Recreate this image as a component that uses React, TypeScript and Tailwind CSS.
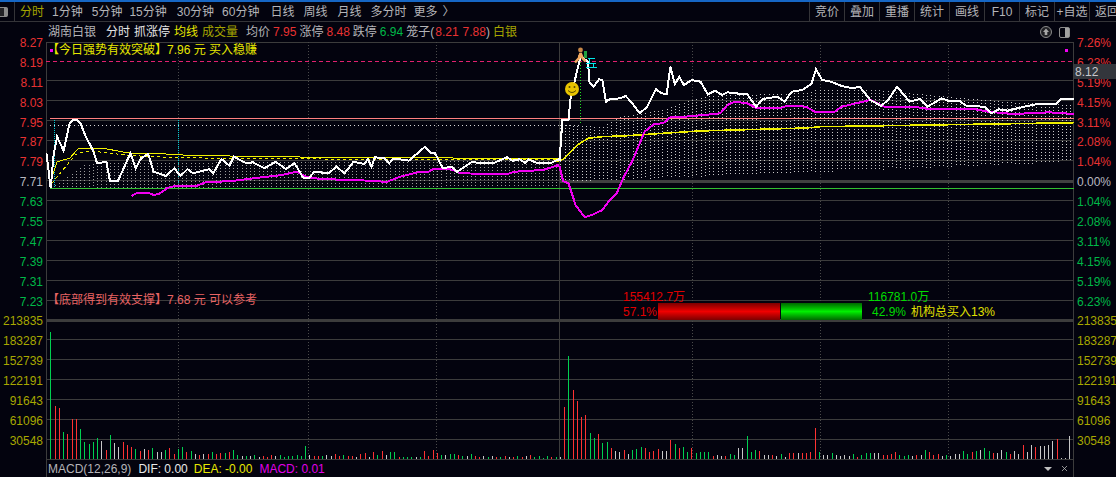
import { X } from "lucide-react";

type Pt = [number, number];

// traces were read off enlarged crops: x is scaled 2.8, y is scaled 3
const trace = (ox: number, oy: number, raw: number[]): Pt[] => {
  const out: Pt[] = [];
  for (let i = 0; i < raw.length; i += 2) out.push([ox + raw[i] / 2.8, oy + raw[i + 1] / 3]);
  return out;
};
const toPoints = (pts: Pt[]) => pts.map(([x, y]) => `${x.toFixed(1)},${y.toFixed(1)}`).join(" ");

const lerp = (table: Pt[], x: number) => {
  for (let i = 1; i < table.length; i++) {
    if (x <= table[i][0]) {
      const [x0, y0] = table[i - 1];
      const [x1, y1] = table[i];
      return y0 + ((y1 - y0) * (x - x0)) / (x1 - x0);
    }
  }
  return table[table.length - 1][1];
};

const priceLine: Pt[] = [
  ...trace(0, 120, [
    130, 100, 142, 205, 150, 105, 160, 50, 178, 92, 195, 10, 205, 0, 216, 0, 225, 10, 240, 50, 260, 90, 272, 130, 298,
    125, 308, 183, 330, 183, 365, 100, 380, 145, 395, 115, 415, 102, 430, 155, 465, 168, 488, 145, 505, 168, 525, 147,
    540, 160, 585, 148, 597, 160, 620, 117, 642, 137, 655, 110, 690, 130, 708, 127, 740, 145, 772, 125, 800, 147, 825,
    130, 850, 175, 865, 175, 880, 155, 920, 160, 942, 140, 965, 160, 990, 125, 1020, 132, 1030, 118, 1040, 140, 1050,
    112, 1075, 115, 1090, 130, 1100, 118, 1120, 118, 1145, 122, 1190, 80, 1205, 98, 1218, 100, 1240, 145, 1265, 140,
    1280, 155, 1320, 127, 1380, 130, 1420, 112, 1435, 122, 1455, 118, 1470, 128, 1480, 118, 1505, 130, 1540, 130, 1565,
    118,
  ]),
  ...trace(556, 0, [
    10, 480, 18, 360, 35, 360, 40, 300, 65, 185, 70, 170, 90, 185, 93, 245, 105, 260, 120, 238, 130, 240, 140, 305, 150,
    298, 180, 295, 195, 288, 210, 305, 235, 340, 255, 320, 280, 268, 295, 280, 310, 282, 320, 200, 333, 252, 345, 230,
    358, 255, 380, 240, 405, 245, 425, 283, 445, 272, 465, 285, 480, 277, 520, 282, 535, 282, 560, 320, 580, 297, 620,
    290, 640, 305, 660, 275, 690, 270, 715, 252, 728, 208, 745, 240, 770, 245, 800, 258, 830, 265, 850, 260, 880, 300,
    910, 318, 930, 300, 955, 260, 990, 305, 1020, 297, 1040, 320, 1080, 295, 1100, 303, 1130, 303, 1150, 318, 1200, 320,
    1220, 340, 1240, 328, 1265, 332, 1310, 320, 1350, 312, 1400, 312, 1415, 297, 1450, 297,
  ]),
];

const magentaLine: Pt[] = [
  ...trace(0, 120, [
    368, 228, 385, 218, 415, 218, 430, 225, 445, 222, 470, 203, 490, 198, 550, 198, 575, 187, 650, 183, 710, 175, 790,
    165, 830, 155, 860, 172, 900, 177, 1060, 183, 1080, 187, 1120, 170, 1170, 157, 1200, 155, 1215, 146, 1260, 147, 1290,
    160, 1420, 163, 1440, 155, 1520, 150, 1565, 135,
  ]),
  ...trace(556, 120, [
    0, 135, 10, 140, 20, 183, 35, 190, 55, 255, 80, 292, 100, 285, 130, 270, 150, 240, 170, 220, 190, 170, 215, 120, 248,
    35, 275, 12, 300, 10,
  ]),
  ...trace(556, 0, [
    320, 352, 360, 350, 415, 345, 460, 340, 480, 315, 500, 305, 535, 310, 560, 323, 630, 323, 650, 317, 700, 320, 725,
    335, 780, 335, 800, 320, 880, 300, 920, 320, 1000, 320, 1050, 328, 1170, 327, 1210, 335, 1280, 342, 1380, 337, 1450,
    342,
  ]),
];

const avgLeft: Pt[] = trace(0, 120, [
  140, 190, 160, 125, 195, 115, 220, 85, 290, 85, 340, 95, 370, 100, 440, 100, 490, 104, 560, 107, 725, 109, 950, 113,
  1565, 115,
]);
const avgRight: Pt[] = trace(556, 120, [
  0, 125, 20, 118, 60, 75, 90, 55, 130, 50, 200, 47, 300, 40, 400, 33, 700, 24, 740, 20, 1100, 14, 1450, 8,
]);
const avgDashed: Pt[] = trace(0, 120, [
  145, 190, 180, 145, 210, 105, 240, 93, 290, 97, 350, 105, 420, 110, 600, 115, 900, 117, 1100, 118, 1565, 118,
]);

const dotTop: Pt[] = [
  [50, 188], [60, 182], [70, 175], [85, 165], [100, 163], [558, 161], [559, 125], [602, 127], [620, 117], [663, 110],
  [692, 100], [710, 96], [806, 93], [817, 90], [877, 90], [949, 97], [1020, 103], [1073, 105],
];
const dotBottom: Pt[] = [[50, 188], [558, 188], [559, 182], [692, 177], [820, 172], [948, 167], [1073, 162]];

const volumes = (
  "g127 r53 r51 g27 r25 r40 r40 g30 g17 g15 g17 g21 w18 r9 g24 w16 w12 r17 r14 r12 " +
  "g10 r8 w10 r9 g11 w7 w7 g9 r11 r5 g10 g12 r7 g8 w5 r4 w5 r5 g7 r5 " +
  "r6 g6 r7 g9 g4 w3 g3 w3 g4 w2 r3 r2 r4 w3 g4 g2 g3 g3 g4 g3 " +
  "g13 w4 r3 r3 g3 w4 w3 r5 r3 g4 r3 r3 w2 r5 r6 w2 r7 g4 r8 w4 " +
  "g7 g7 r2 g2 g2 g2 w2 g2 r8 r3 r9 r6 g4 w4 g5 g5 r4 g3 w3 g5 " +
  "r3 r2 w3 g2 w3 r2 g2 r3 w2 r2 g3 r2 w3 r4 g2 g3 g1 g3 r2 g2 " +
  "w2 r52 g103 r69 r58 r42 r44 g26 g21 r25 g16 g17 r11 w8 w7 r9 w5 g9 g10 g12 " +
  "r11 r7 r8 r10 w8 w8 r19 g15 r11 g12 g7 r11 g6 g7 g7 g7 r3 w4 w3 r3 " +
  "g5 g4 w11 w11 g23 g7 g9 r8 w4 w4 r4 w3 g5 w2 r6 r6 w6 r6 r6 r7 " +
  "r31 g7 w4 w4 g6 w4 w3 w4 w3 g5 r2 g4 g6 g6 w6 w6 r4 r4 r5 r7 " +
  "g4 g3 g4 w3 r4 w4 g9 r7 r4 r5 w3 g4 w3 w5 w5 g8 g5 r7 g8 w9 " +
  "g11 g8 r6 w6 w9 g7 r5 w8 w5 r14 w7 w14 r12 w13 w13 w14 w18 r20 w1 w1 w23"
)
  .split(" ")
  .map((v) => ({ kind: v[0], h: Number(v.slice(1)) }));

const barColor: Record<string, string> = { g: "#00d050", r: "#ff3232", w: "#c8c8c8" };

const gridY = [81, 101, 121, 141, 161, 181, 201, 221, 241, 261, 281, 301, 340, 360, 380, 400, 420, 440];
const dottedX = [178, 308, 436, 692, 820, 948];
const dotColumns = Array.from({ length: 241 }, (_, i) => 50.4 + i * 4.25);

const leftAxis = [
  ["8.27", "r"], ["8.19", "r"], ["8.11", "r"], ["8.03", "r"], ["7.95", "r"], ["7.87", "r"], ["7.79", "r"],
  ["7.71", "n"], ["7.63", "g"], ["7.55", "g"], ["7.47", "g"], ["7.39", "g"], ["7.31", "g"], ["7.23", "g"],
  ["213835", "v"], ["183287", "v"], ["152739", "v"], ["122191", "v"], ["91643", "v"], ["61096", "v"], ["30548", "v"],
];
const rightAxis = [
  ["7.26%", "r"], ["6.23%", "r"], ["5.19%", "r"], ["4.15%", "r"], ["3.11%", "r"], ["2.08%", "r"], ["1.04%", "r"],
  ["0.00%", "n"], ["1.04%", "g"], ["2.08%", "g"], ["3.11%", "g"], ["4.15%", "g"], ["5.19%", "g"], ["6.23%", "g"],
  ["213835", "v"], ["183287", "v"], ["152739", "v"], ["122191", "v"], ["91643", "v"], ["61096", "v"], ["30548", "v"],
];
const axisColor: Record<string, string> = {
  r: "text-[#e83232]",
  g: "text-[#00b848]",
  n: "text-[#b8b8c0]",
  v: "text-[#a8a800]",
};

const periods = [
  ["1分钟", "ml-[8px]"], ["5分钟", "ml-[9px]"], ["15分钟", "ml-[7px]"], ["30分钟", "ml-[10px]"], ["60分钟", "ml-[8px]"],
  ["日线", "ml-[11px]"], ["周线", "ml-[9px]"], ["月线", "ml-[10px]"], ["多分时", "ml-[9px]"], ["更多", "ml-[7px]"],
];
const tools = ["竞价", "叠加", "重播", "统计", "画线", "F10", "标记", "+自选", "返回"];

function Chart() {
  return (
    <svg width={1028} height={418} viewBox="46 42 1028 418" className="block" shapeRendering="crispEdges" fill="none">
      <line x1={46} x2={1074} y1={42.5} y2={42.5} stroke="#3c3c3c" />
      {gridY.map((y) => (
        <line key={y} x1={46} x2={1074} y1={y - 0.5} y2={y - 0.5} stroke="#3c3c3c" />
      ))}
      <line x1={46} x2={1074} y1={320.5} y2={320.5} stroke="#3c3c3c" strokeWidth={3} />
      <line x1={46} x2={1074} y1={459.5} y2={459.5} stroke="#3c3c3c" />
      <line x1={559} x2={1074} y1={181.5} y2={181.5} stroke="#404040" strokeWidth={3} />
      <line x1={46.5} x2={46.5} y1={42} y2={460} stroke="#3c3c3c" />
      <line x1={559.5} x2={559.5} y1={42} y2={460} stroke="#3c3c3c" />
      <line x1={1073.5} x2={1073.5} y1={42} y2={460} stroke="#3c3c3c" />
      {dottedX.map((x) => (
        <line key={x} x1={x + 0.5} x2={x + 0.5} y1={42} y2={460} stroke="#4a4a4a" strokeDasharray="1 2" />
      ))}
      <line x1={54.5} x2={54.5} y1={118} y2={188} stroke="#00c8d0" strokeDasharray="1 1" />
      <line x1={178.5} x2={178.5} y1={118} y2={188} stroke="#00c8d0" strokeDasharray="1 1" />
      <line x1={580.5} x2={580.5} y1={62} y2={125} stroke="#20e020" strokeDasharray="1 2" />

      {dotColumns.map((x) => (
        <line
          key={x}
          x1={Math.round(x) + 0.5}
          x2={Math.round(x) + 0.5}
          y1={Math.round(lerp(dotTop, x))}
          y2={Math.round(lerp(dotBottom, x))}
          stroke={x < 558 ? "#9c9c9c" : "#c8c8c8"}
          strokeDasharray="1 2"
        />
      ))}
      <line x1={50} x2={580} y1={125.5} y2={125.5} stroke="#d8d8d8" strokeDasharray="1 3" />

      <line x1={46} x2={1074} y1={61.5} y2={61.5} stroke="#e0206e" strokeDasharray="4 3" />
      <line x1={50} x2={1074} y1={118.5} y2={118.5} stroke="#ff8080" />
      <line x1={50} x2={1074} y1={188.5} y2={188.5} stroke="#30c030" />

      {volumes.map((bar, i) => (
        <rect
          key={i}
          x={Math.ceil(50 + i * 4.245)}
          y={459 - bar.h}
          width={1}
          height={bar.h}
          fill={barColor[bar.kind]}
        />
      ))}

      <polyline points={toPoints(avgDashed)} stroke="#f0f000" strokeDasharray="3 3" />
      <polyline points={toPoints(avgLeft)} stroke="#f0f000" />
      <polyline points={toPoints(avgRight)} stroke="#f0f000" strokeWidth={1.6} />
      <polyline points={toPoints(magentaLine)} stroke="#f000f0" strokeWidth={2} />
      <polyline points={toPoints(priceLine)} stroke="#ffffff" strokeWidth={2} />

      {/* buy flag, runner and smiley on the peak */}
      <rect x={584} y={51} width={3} height={7} fill="#20a040" />
      <g stroke="#00e8e8">
        <path d="M588 58.5h7M586 63.5h10M586 67.5h11M589 58v5M593 63v4" />
      </g>
      <g shapeRendering="auto">
        <circle cx={580.5} cy={50} r={2.4} fill="#c88848" />
        <path d="M580.5 53l-1.5 5-4 4.5M580.5 53l2 5 3 3.5M578 56.5l5 .5" stroke="#f0a860" strokeWidth={2.6} />
        <circle cx={572} cy={89} r={7} fill="#e8c400" />
        <circle cx={569.5} cy={87} r={1} fill="#5a4a00" />
        <circle cx={574.5} cy={87} r={1} fill="#5a4a00" />
        <path d="M568 90.5q4 4 8 0" stroke="#5a4a00" />
      </g>
    </svg>
  );
}

export default function App() {
  return (
    <div className="w-[1116px] h-[477px] overflow-hidden bg-[#03030e] flex flex-col font-['Liberation_Sans','Noto_Sans_CJK_SC',sans-serif] text-[12px] leading-none text-[#b4b4b8]">
      <div className="h-[2px] bg-[#1666c4]" />

      {/* top toolbar */}
      <div className="h-[20px] flex items-stretch border-b border-[#343438]">
        <div className="w-[15px] shrink-0 flex items-center border-r border-[#343438]">
          <div className="w-[8px] h-[10px] bg-[#8a8a8a] rounded-r-[2px] border border-l-0 border-[#8a8a8a] flex">
            <div className="w-[4px] h-full bg-[#222226]" />
          </div>
        </div>
        <div className="flex items-center pl-[5px] w-[794px] shrink-0">
          <span className="text-[#a6a600]">分时</span>
          {periods.map(([label, gap]) => (
            <span key={label} className={gap}>
              {label}
            </span>
          ))}
          <span className="ml-[5px]">〉</span>
        </div>
        {tools.map((tool) => (
          <div key={tool} className="w-[35px] shrink-0 border-l border-[#343438] flex items-center justify-center whitespace-nowrap">
            {tool}
          </div>
        ))}
      </div>

      {/* info row */}
      <div className="h-[20px] flex items-center pl-[48px] pr-[46px] whitespace-nowrap">
        <span>湖南白银</span>
        <span className="ml-[10px] text-[#e4e4e4]">分时</span>
        <span className="ml-[4px] text-[#e4e4e4]">抓涨停</span>
        <span className="ml-[4px] text-[#e8e800]">均线</span>
        <span className="ml-[4px] text-[#a6a600]">成交量</span>
        <span className="ml-[8px]">均价</span>
        <span className="ml-[3px] text-[#e83232]">7.95</span>
        <span className="ml-[3px]">涨停</span>
        <span className="ml-[3px] text-[#e83232]">8.48</span>
        <span className="ml-[3px]">跌停</span>
        <span className="ml-[3px] text-[#00b848]">6.94</span>
        <span className="ml-[3px]">笼子(</span>
        <span className="ml-[1px] text-[#e83232]">8.21</span>
        <span className="ml-[4px] text-[#e83232]">7.88</span>
        <span>)</span>
        <span className="ml-[3px] text-[#a6a600]">白银</span>
        <div className="ml-auto flex items-center gap-[7px]">
          <svg width={12} height={12} viewBox="0 0 12 12" fill="none">
            <circle cx={6} cy={6} r={5.5} stroke="#8c8c8c" fill="#202024" />
            <path d="M6 2.5L9 6H7.3v3H4.7V6H3z" fill="#a8a8a8" />
          </svg>
          <div className="w-[11px] h-[11px] rounded-[2px] border border-[#8c8c8c] flex justify-end">
            <div className="w-[4px] h-full bg-[#a0a0a0]" />
          </div>
        </div>
      </div>

      {/* chart with both axes */}
      <div className="h-[418px] flex">
        <div className="w-[46px] shrink-0 -mt-[9px] pr-[3px] text-right">
          {leftAxis.map(([label, kind]) => (
            <div key={label} className={`h-[19.9px] flex items-center justify-end ${axisColor[kind]}`}>
              {label}
            </div>
          ))}
        </div>

        <div className="relative w-[1028px] shrink-0">
          <Chart />

          <div className="absolute left-[4px] top-[7px] w-[3px] h-[3px] bg-[#f000f0]" />
          <div className="absolute left-[1px] top-[2px] text-[#e8e800] whitespace-pre h-[12px]">
            【今日强势有效突破】7.96 元 买入稳赚
          </div>
          <div className="absolute left-[1019px] top-[7px] w-[3px] h-[3px] bg-[#f000f0]" />

          <div className="absolute left-[1px] top-[252px] text-[#e86464] whitespace-pre">
            【底部得到有效支撑】7.68 元 可以参考
          </div>

          <div className="absolute left-[577px] top-[249px] text-[#e00000]">155412.7万</div>
          <div className="absolute left-[822px] top-[249px] text-[#00dc00]">116781.0万</div>
          <div className="absolute left-[577px] top-[264px] text-[#e00000]">57.1%</div>
          <div className="absolute left-[612px] top-[261px] flex h-[17px]">
            <div className="w-[122px] bg-gradient-to-b from-[#7c0000] via-[#f00000] to-[#7c0000]" />
            <div className="w-[81px] ml-[1px] bg-gradient-to-b from-[#006800] via-[#00f000] to-[#006800]" />
          </div>
          <div className="absolute left-[826px] top-[264px] text-[#00dc00]">42.9%</div>
          <div className="absolute left-[865px] top-[264px] text-[#e0e000]">机构总买入13%</div>
        </div>

        <div className="relative flex-1 -mt-[9px] pl-[3px] overflow-hidden">
          {rightAxis.map(([label, kind], i) => (
            <div key={`${label}-${i}`} className={`h-[19.9px] flex items-center whitespace-nowrap ${axisColor[kind]}`}>
              {label}
            </div>
          ))}
          <div className="absolute left-0 right-0 top-[31px] h-[15px] bg-[#33363c] text-[#c8c8cc] flex items-center pl-[1px]">
            8.12
          </div>
        </div>
      </div>

      {/* indicator row */}
      <div className="flex-1 flex">
        <div className="w-[46px] shrink-0" />
        <div className="w-[1028px] shrink-0 border-x border-[#3c3c3c] flex items-center pl-[1px] pr-[2px] whitespace-nowrap">
          <span>MACD(12,26,9)</span>
          <span className="ml-[7px] text-[#e8e8e8]">DIF: 0.00</span>
          <span className="ml-[6px] text-[#e8e800]">DEA: -0.00</span>
          <span className="ml-[7px] text-[#e000e8]">MACD: 0.01</span>
          <div className="ml-auto mr-[2px] flex items-center gap-[8px]">
            <div className="w-0 h-0 border-x-[4px] border-x-transparent border-t-[4px] border-t-[#c0c0c0]" />
            <X size={9} strokeWidth={2} color="#c0c0c0" />
          </div>
        </div>
      </div>
    </div>
  );
}
